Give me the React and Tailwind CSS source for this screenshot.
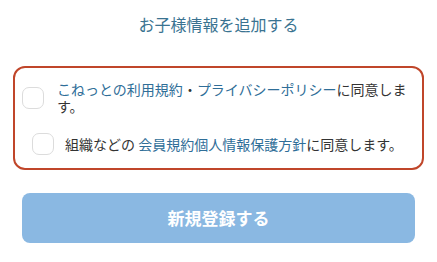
import React, { useState } from "react";

const font = { fontFamily: '"Noto Sans CJK JP", "Noto Sans", sans-serif' };

const Check = ({ checked, onChange }) => (
  <button
    type="button"
    onClick={onChange}
    className={`w-[22px] h-[22px] shrink-0 rounded-[7px] border border-[#dcdcdc] bg-white ${
      checked ? "bg-[#8ab8e2]" : ""
    }`}
  />
);

const App = () => {
  const [terms, setTerms] = useState(false);
  const [org, setOrg] = useState(false);

  return (
    <div className="w-[437px] h-[262px] bg-white px-[13px] pt-[12px]" style={font}>
      <div className="text-center text-[16px] leading-[24px] text-[#3a7391]">
        お子様情報を追加する
      </div>

      <div className="mt-[30px] border-2 border-[#c0462a] rounded-[12px] pt-[13px] pb-[13px]">
        <div className="flex items-center gap-[13px] pl-[7px] pr-[10px]">
          <Check checked={terms} onChange={() => setTerms(!terms)} />
          <p className="text-[14px] leading-[17px] text-[#333]">
            <span className="text-[#2f6e98]">こねっとの利用規約</span>・
            <span className="text-[#2f6e98]">プライバシーポリシー</span>に同意します。
          </p>
        </div>

        <div className="flex items-center gap-[11px] pl-[17px] pr-[10px] mt-[18px]">
          <Check checked={org} onChange={() => setOrg(!org)} />
          <p className="text-[14px] leading-[17px] text-[#333]">
            組織などの <span className="text-[#2f6e98]">会員規約個人情報保護方針</span>に同意します。
          </p>
        </div>
      </div>

      <div className="px-[9px] mt-[23px]">
        <button
          type="button"
          className="w-full h-[50px] rounded-[8px] bg-[#8ab8e2] text-white text-[17px] font-bold"
        >
          新規登録する
        </button>
      </div>
    </div>
  );
};

export default App;
